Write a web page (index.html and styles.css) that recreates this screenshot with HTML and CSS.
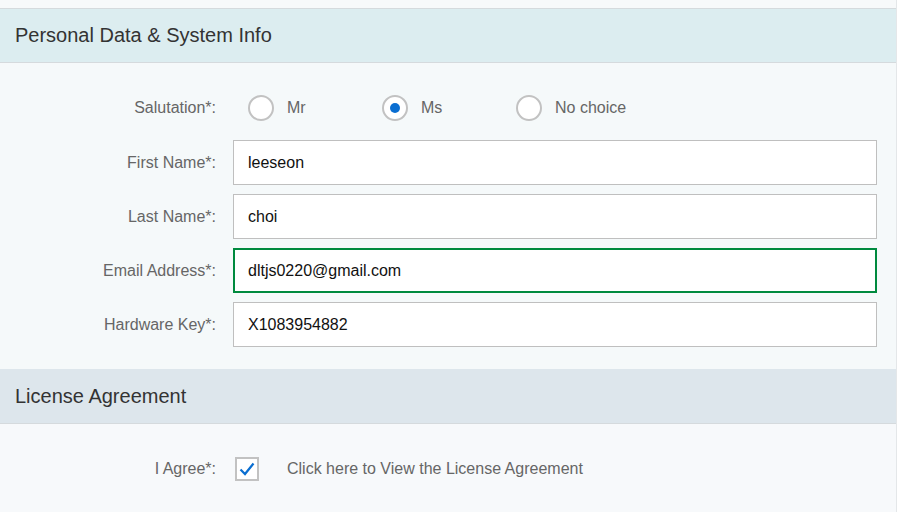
FILE: index.html
```html
<!DOCTYPE html>
<html>

<head>
  <title>Registration</title>
  <link rel="stylesheet" href="styles.css">
</head>

<body>
  <div class="top-strip"></div>

  <section class="panel">
    <h2 class="panel-title personal">Personal Data &amp; System Info</h2>
    <div class="panel-body personal-body">
      <div class="form-row">
        <label class="form-label">Salutation*:</label>
        <div class="radio-group">
          <label class="radio-option"><span class="radio"></span>Mr</label>
          <label class="radio-option"><span class="radio checked"></span>Ms</label>
          <label class="radio-option"><span class="radio"></span>No choice</label>
        </div>
      </div>

      <div class="form-row">
        <label class="form-label" for="first">First Name*:</label>
        <input type="text" id="first" class="input-box" value="leeseon">
      </div>

      <div class="form-row">
        <label class="form-label" for="last">Last Name*:</label>
        <input type="text" id="last" class="input-box" value="choi">
      </div>

      <div class="form-row">
        <label class="form-label" for="email">Email Address*:</label>
        <input type="text" id="email" class="input-box valid" value="dltjs0220@gmail.com">
      </div>

      <div class="form-row">
        <label class="form-label" for="hwkey">Hardware Key*:</label>
        <input type="text" id="hwkey" class="input-box" value="X1083954882">
      </div>
    </div>
  </section>

  <section class="panel">
    <h2 class="panel-title license">License Agreement</h2>
    <div class="panel-body license-body">
      <div class="form-row">
        <label class="form-label">I Agree*:</label>
        <div class="agree">
          <span class="checkbox">
            <svg width="16" height="14" viewBox="0 0 16 14">
              <path d="M1.5 7.5 L6 12 L14.5 1.5" fill="none" stroke="#0a6ed1" stroke-width="2.2" />
            </svg>
          </span>
          <a href="#" class="license-link">Click here to View the License Agreement</a>
        </div>
      </div>
    </div>
  </section>
</body>

</html>
```

FILE: styles.css
```css
* {
  font-family: Arial, "Liberation Sans", sans-serif;
  box-sizing: border-box;
}

body {
  margin: 0;
  background-color: #f7f9fa;
  height: 512px;
  overflow: hidden;
  border-right: 1px solid #e4e7e9;
}

.top-strip {
  height: 8px;
  background-color: #f7f9fa;
}

.panel-title {
  margin: 0;
  height: 55px;
  padding-left: 15px;
  display: flex;
  align-items: center;
  font-size: 20px;
  font-weight: normal;
  color: #333;
  border-top: 1px solid #d5dadd;
  border-bottom: 1px solid #d5dadd;
}

.personal {
  background-color: #dcedf0;
}

.license {
  background-color: #dde6ec;
  border-top: none;
}

.panel-body {
  padding: 22px 19px 22px 0;
  display: flex;
  flex-direction: column;
  gap: 9px;
}

.personal-body {
  background-color: #f5f9fa;
}

.personal-body .form-row:first-child {
  margin-bottom: 1px;
}

.license-body {
  background-color: #f7f9fb;
}

.form-row {
  display: grid;
  grid-template-columns: 216px 1fr;
  column-gap: 17px;
  align-items: center;
  height: 45px;
}

.form-label {
  text-align: right;
  font-size: 16px;
  color: #666;
}

.input-box {
  height: 45px;
  width: 100%;
  border: 1px solid #bfbfbf;
  background-color: #fff;
  padding: 0 14px;
  font-size: 16px;
  color: #111;
  outline: 0;
}

.input-box.valid {
  border: 2px solid #008a3e;
  padding: 0 13px;
}

.radio-group {
  display: flex;
  padding-left: 15px;
}

.radio-option {
  display: flex;
  align-items: center;
  width: 134px;
  font-size: 16px;
  color: #666;
}

.radio {
  width: 26px;
  height: 26px;
  border-radius: 50%;
  border: 2px solid #c2c2c2;
  background-color: #fff;
  margin-right: 13px;
  display: flex;
  align-items: center;
  justify-content: center;
}

.radio.checked::after {
  content: "";
  width: 10px;
  height: 10px;
  border-radius: 50%;
  background-color: #0a6ed1;
}

.agree {
  display: flex;
  align-items: center;
  padding-left: 2px;
}

.checkbox {
  width: 24px;
  height: 24px;
  border: 2px solid #c2c2c2;
  background-color: #fff;
  display: flex;
  align-items: center;
  justify-content: center;
  margin-right: 28px;
}

.license-link {
  font-size: 16px;
  color: #666;
  text-decoration: none;
}
```
